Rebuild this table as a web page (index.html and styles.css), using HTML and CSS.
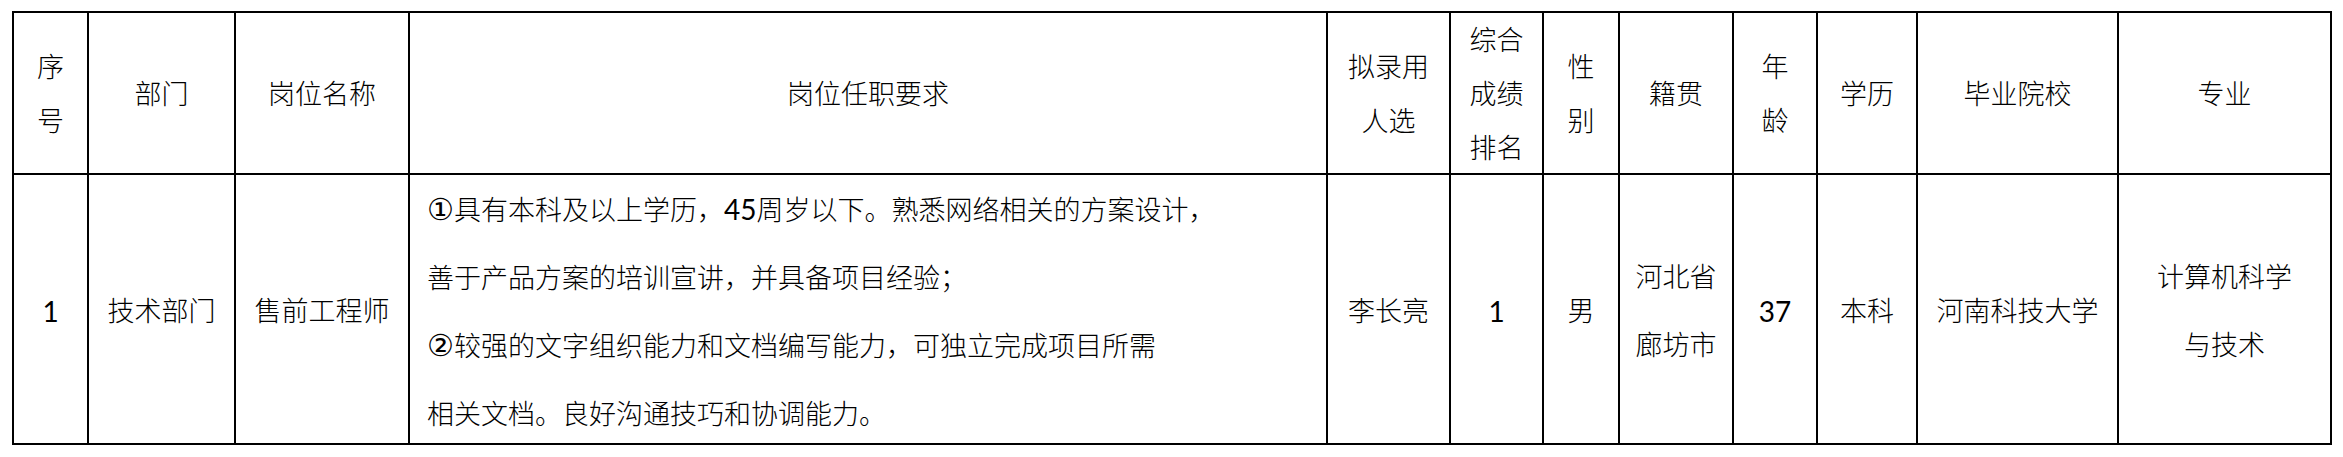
FILE: index.html
```html
<!DOCTYPE html>
<html lang="zh-CN">
<head>
<meta charset="utf-8">
<title>拟录用人选</title>
<link rel="stylesheet" href="styles.css">
</head>
<body>
<div class="sheet">
  <div class="cell head">序<br>号</div>
  <div class="cell head">部门</div>
  <div class="cell head">岗位名称</div>
  <div class="cell head">岗位任职要求</div>
  <div class="cell head">拟录用<br>人选</div>
  <div class="cell head">综合<br>成绩<br>排名</div>
  <div class="cell head">性<br>别</div>
  <div class="cell head">籍贯</div>
  <div class="cell head">年<br>龄</div>
  <div class="cell head">学历</div>
  <div class="cell head">毕业院校</div>
  <div class="cell head">专业</div>

  <div class="cell body"><span class="num">1</span></div>
  <div class="cell body">技术部门</div>
  <div class="cell body">售前工程师</div>
  <div class="cell body req">
    <div class="lines">
      <span><span class="mark">①</span>具有本科及以上学历，<span class="num">45</span>周岁以下。熟悉网络相关的方案设计，</span>
      <span>善于产品方案的培训宣讲，并具备项目经验；</span>
      <span><span class="mark">②</span>较强的文字组织能力和文档编写能力，可独立完成项目所需</span>
      <span>相关文档。良好沟通技巧和协调能力。</span>
    </div>
  </div>
  <div class="cell body">李长亮</div>
  <div class="cell body"><span class="num">1</span></div>
  <div class="cell body">男</div>
  <div class="cell body">河北省<br>廊坊市</div>
  <div class="cell body"><span class="num">37</span></div>
  <div class="cell body">本科</div>
  <div class="cell body">河南科技大学</div>
  <div class="cell body">计算机科学<br>与技术</div>
</div>
</body>
</html>
```

FILE: styles.css
```css
html, body {
  margin: 0;
  background: #fff;
}

body {
  padding: 11px 12px;
  color: #000;
  font-family: Lato, "Noto Sans CJK SC", sans-serif;
}

.sheet {
  display: grid;
  grid-template-columns: 73px 145px 172px 916px 121px 91px 74px 112px 82px 98px 199px 211px;
  grid-template-rows: 160px 268px;
  gap: 2px;
  padding: 2px;
  background: #000;
  width: max-content;
}

.cell {
  background: #fff;
  display: flex;
  align-items: center;
  justify-content: center;
  text-align: center;
  font-size: 27px;
  white-space: nowrap;
}

.head {
  line-height: 54px;
  font-family: "Noto Sans CJK SC", sans-serif;
  font-weight: 300;
}

.body {
  line-height: 68px;
  font-weight: 300;
  padding-top: 4px;
}

.num {
  font-weight: 400;
  font-size: 28px;
}

.mark {
  font-family: "DejaVu Sans", sans-serif;
  font-weight: 400;
  font-size: 30px;
}

.req {
  justify-content: flex-start;
  text-align: left;
  padding-left: 17px;
}

.lines {
  display: flex;
  flex-direction: column;
}
```
